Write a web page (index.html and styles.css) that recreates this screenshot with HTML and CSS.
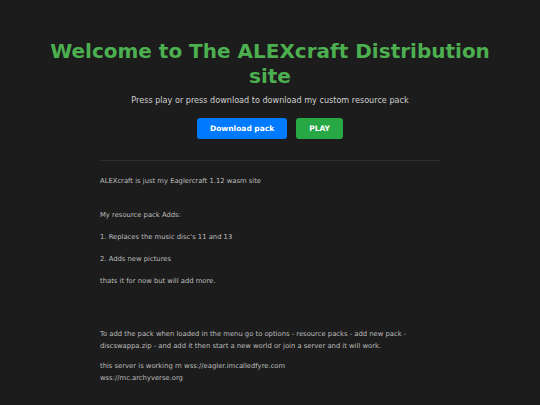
FILE: index.html
```html
<!DOCTYPE html>
<html>
<head>
<meta charset="utf-8">
<link rel="stylesheet" href="styles.css">
</head>
<body>
<header class="hero">
  <h1 class="title">Welcome to The ALEXcraft Distribution site</h1>
  <p class="subtitle">Press play or press download to download my custom resource pack</p>
  <div class="actions">
    <a class="btn btn-blue">Download pack</a>
    <a class="btn btn-green">PLAY</a>
  </div>
</header>
<main class="content">
  <p class="para gap-lg">ALEXcraft is just my Eaglercraft 1.12 wasm site</p>
  <p class="para">My resource pack Adds:</p>
  <p class="para">1. Replaces the music disc's 11 and 13</p>
  <p class="para">2. Adds new pictures</p>
  <p class="para gap-xl">thats it for now but will add more.</p>
  <p class="para">To add the pack when loaded in the menu go to options - resource packs - add new pack - discswappa.zip - and add it then start a new world or join a server and it will work.</p>
  <p class="para">this server is working rn wss://eagler.imcalledfyre.com<br>wss://mc.archyverse.org</p>
</main>
</body>
</html>
```

FILE: styles.css
```css
html, body {
  margin: 0;
  padding: 0;
  background: #1c1c1c;
}
body {
  font-family: "DejaVu Sans", Verdana, sans-serif;
  color: #c8c8c8;
}
.hero {
  text-align: center;
  padding-top: 39px;
}
.title {
  margin: 0 auto;
  width: 460px;
  font-size: 20px;
  line-height: 25px;
  font-weight: bold;
  color: #4caf50;
}
.subtitle {
  margin: 5px 0 0;
  font-size: 8.1px;
  line-height: 12px;
  color: #cfcfcf;
}
.actions {
  margin-top: 12px;
  display: flex;
  justify-content: center;
  gap: 9px;
}
.btn {
  display: block;
  height: 21px;
  line-height: 21px;
  padding: 0 13px;
  border-radius: 3px;
  font-size: 7.5px;
  font-weight: bold;
  color: #fff;
}
.btn-blue { background: #007bff; }
.btn-green { background: #28a745; }
.content {
  width: 340px;
  margin: 21px auto 0;
  border-top: 1px solid #2e2e2e;
  padding-top: 14px;
  box-sizing: border-box;
}
.para {
  margin: 0 0 10px;
  font-size: 6.8px;
  line-height: 12px;
  color: #bdbdbd;
}
.para.gap-lg { margin-bottom: 22px; }
.para.gap-xl { margin-bottom: 41px; }
.para:last-child { margin-top: -2px; }
```
